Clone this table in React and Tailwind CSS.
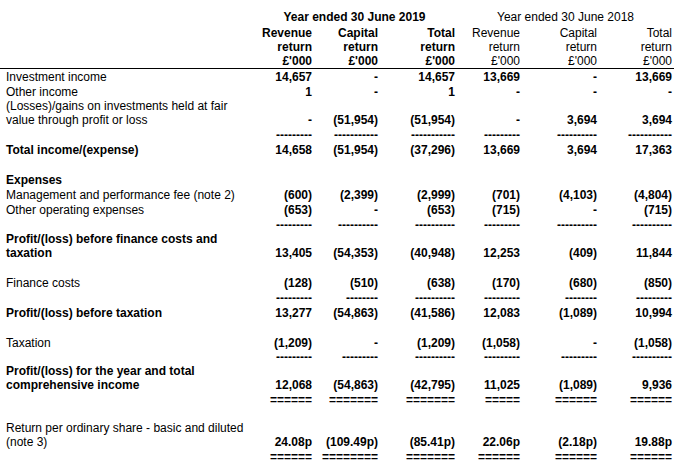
const d = (n) => "-".repeat(n);
const e = (n) => "=".repeat(n);

const rows = [
  { label: ["Investment income"], v: ["14,657", "-", "14,657", "13,669", "-", "13,669"] },
  { label: ["Other income"], v: ["1", "-", "1", "-", "-", "-"] },
  {
    label: ["(Losses)/gains on investments held at fair", "value through profit or loss"],
    v: ["-", "(51,954)", "(51,954)", "-", "3,694", "3,694"],
  },
  { line: [d(9), d(11), d(11), d(9), d(10), d(11)] },
  {
    label: ["Total income/(expense)"],
    bold: true,
    v: ["14,658", "(51,954)", "(37,296)", "13,669", "3,694", "17,363"],
  },
  { blank: true },
  { label: ["Expenses"], bold: true, v: ["", "", "", "", "", ""] },
  {
    label: ["Management and performance fee (note 2)"],
    v: ["(600)", "(2,399)", "(2,999)", "(701)", "(4,103)", "(4,804)"],
  },
  { label: ["Other operating expenses"], v: ["(653)", "-", "(653)", "(715)", "-", "(715)"] },
  { line: [d(9), d(10), d(10), d(9), d(10), d(10)] },
  {
    label: ["Profit/(loss) before finance costs and", "taxation"],
    bold: true,
    v: ["13,405", "(54,353)", "(40,948)", "12,253", "(409)", "11,844"],
  },
  { blank: true },
  { label: ["Finance costs"], v: ["(128)", "(510)", "(638)", "(170)", "(680)", "(850)"] },
  { line: [d(9), d(8), d(10), d(9), d(8), d(9)] },
  {
    label: ["Profit/(loss) before taxation"],
    bold: true,
    v: ["13,277", "(54,863)", "(41,586)", "12,083", "(1,089)", "10,994"],
  },
  { blank: true },
  { label: ["Taxation"], v: ["(1,209)", "-", "(1,209)", "(1,058)", "-", "(1,058)"] },
  { line: [d(9), d(9), d(10), d(9), d(9), d(10)], short: true },
  {
    label: ["Profit/(loss) for the year and total", "comprehensive income"],
    bold: true,
    v: ["12,068", "(54,863)", "(42,795)", "11,025", "(1,089)", "9,936"],
  },
  { line: [e(6), e(7), e(7), e(5), e(6), e(6)] },
  { blank: true, short: true },
  {
    label: ["Return per ordinary share - basic and diluted", "(note 3)"],
    v: ["24.08p", "(109.49p)", "(85.41p)", "22.06p", "(2.18p)", "19.88p"],
  },
  { line: [e(6), e(8), e(7), e(6), e(6), e(6)] },
];

const heads = [
  ["Revenue", "return", "£'000"],
  ["Capital", "return", "£'000"],
  ["Total", "return", "£'000"],
];

const App = () => {
  return (
    <div className="min-h-[467px] bg-white pt-[10px] font-['Liberation_Sans',Arial,sans-serif] text-[12px] leading-[14px] text-black">
      <table className="table-fixed w-[674px] border-collapse">
        <colgroup>
          <col className="w-[252px]" />
          <col className="w-[62px]" />
          <col className="w-[66px]" />
          <col className="w-[77px]" />
          <col className="w-[65px]" />
          <col className="w-[77px]" />
          <col className="w-[75px]" />
        </colgroup>
        <thead>
          <tr>
            <th></th>
            <th colSpan={3} className="pb-[2px] text-center font-bold">
              Year ended 30 June 2019
            </th>
            <th colSpan={3} className="pb-[2px] text-center font-normal">
              Year ended 30 June 2018
            </th>
          </tr>
          <tr className="border-b border-black">
            <th></th>
            {[...heads, ...heads].map((h, i) => (
              <th
                key={i}
                className={`pr-[2px] text-right align-bottom ${i < 3 ? "font-bold" : "font-normal"}`}
              >
                {h[0]}
                <br />
                {h[1]}
                <br />
                {h[2]}
              </th>
            ))}
          </tr>
        </thead>
        <tbody>
          {rows.map((r, i) => {
            if (r.blank) {
              return (
                <tr key={i} className={r.short ? "h-[14px]" : "h-[15px]"}>
                  <td colSpan={7}></td>
                </tr>
              );
            }
            if (r.line) {
              return (
                <tr key={i} className={r.short ? "h-[14px]" : "h-[15px]"}>
                  <td></td>
                  {r.line.map((s, j) => (
                    <td key={j} className="pr-[2px] text-right align-bottom font-bold leading-[13px]">
                      {s}
                    </td>
                  ))}
                </tr>
              );
            }
            return (
              <tr key={i} className={r.label.length > 1 ? "h-[28px]" : "h-[15px]"}>
                <td className={`pl-[6px] align-bottom ${r.bold ? "font-bold" : ""}`}>
                  {r.label.map((l, j) => (
                    <div key={j}>{l}</div>
                  ))}
                </td>
                {r.v.map((v, j) => (
                  <td key={j} className="pr-[2px] text-right align-bottom font-bold">
                    {v}
                  </td>
                ))}
              </tr>
            );
          })}
        </tbody>
      </table>
    </div>
  );
};

export default App;
